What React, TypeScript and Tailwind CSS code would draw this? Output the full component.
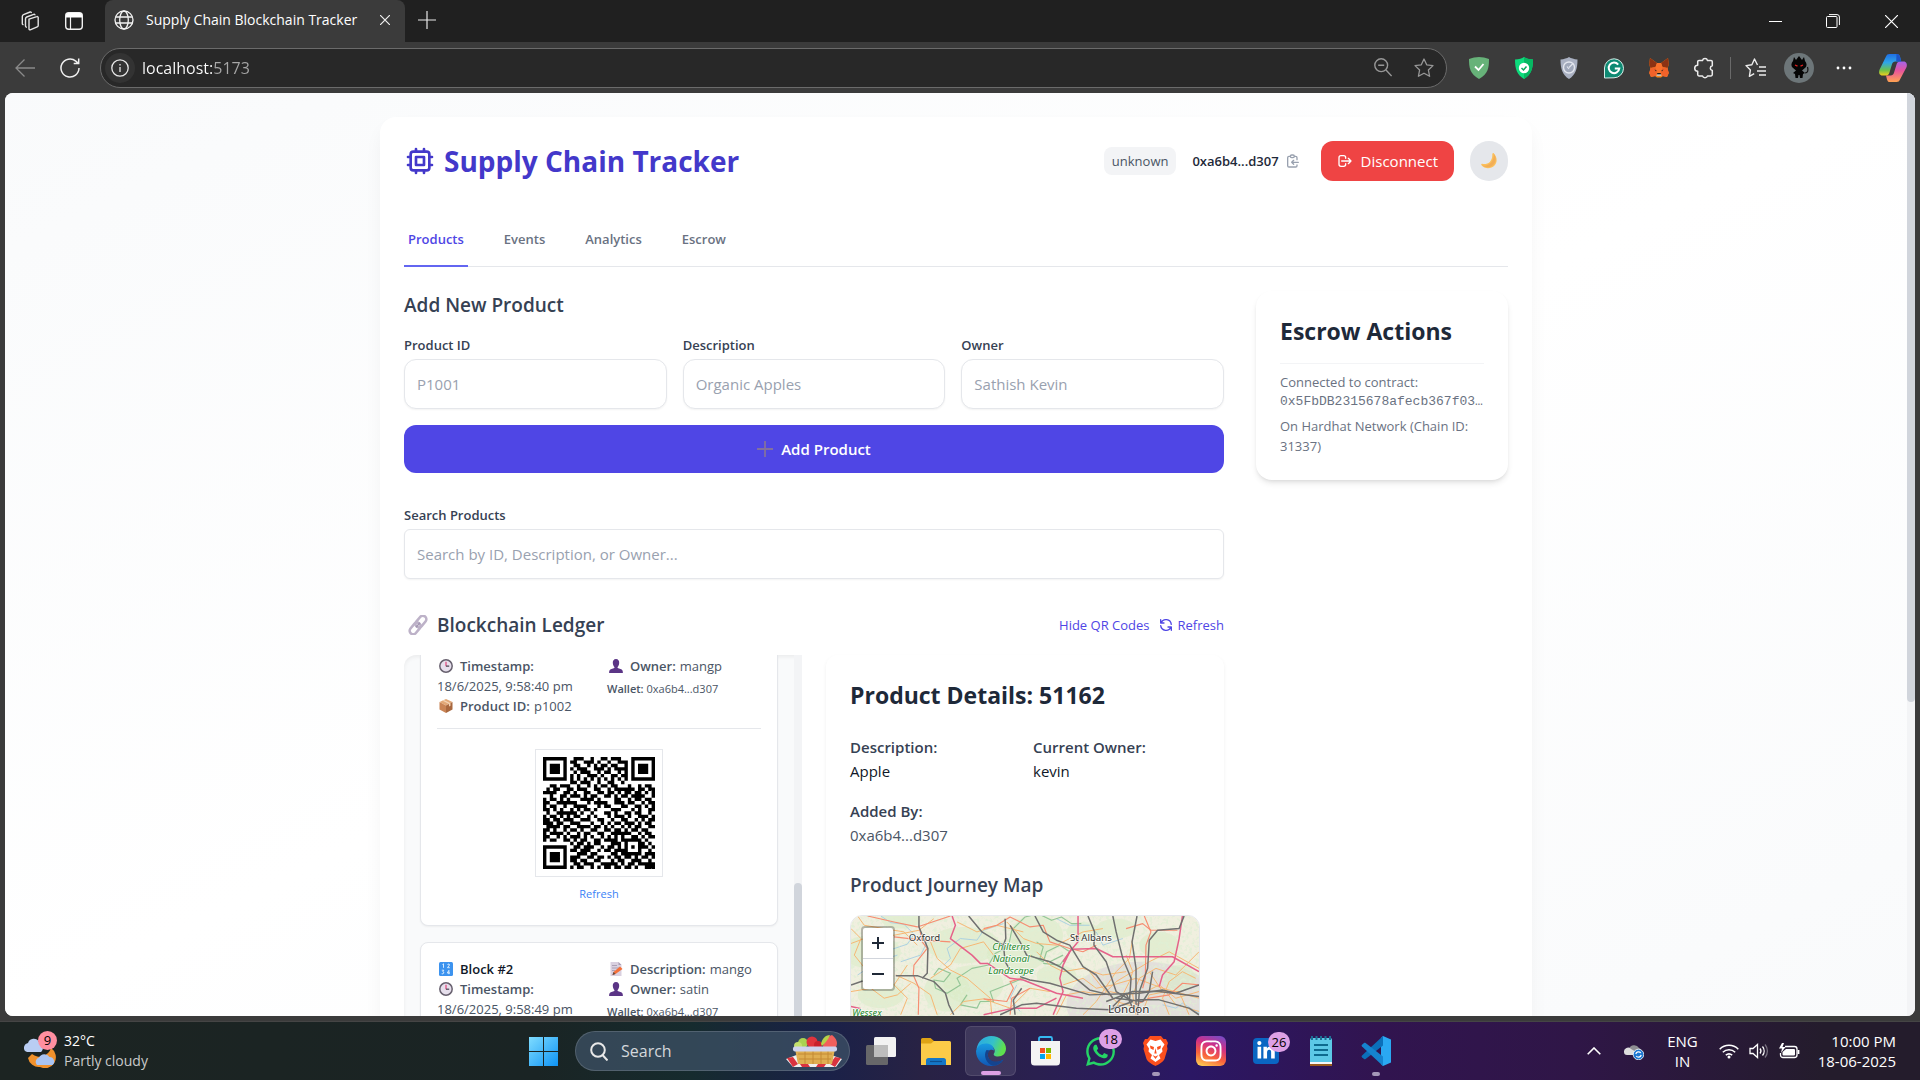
import type { ReactNode } from "react";
import {
  HiOutlineChip,
  HiOutlineClipboardCopy,
  HiOutlineLogout,
  HiOutlineRefresh,
} from "react-icons/hi";
import { FaWhatsapp, FaInstagram, FaLinkedinIn } from "react-icons/fa";

/* ---------- browser chrome ---------- */

function WorkspacesIcon() {
  return (
    <svg viewBox="0 0 24 24" className="size-6" fill="none" stroke="#e4e4e4" strokeWidth="1.4" strokeLinejoin="round" strokeLinecap="round">
      <path d="M11 10.2l7.8-2.6a1 1 0 0 1 1.4 1v7.8a1.6 1.6 0 0 1-1 1.5l-7 2.9a1 1 0 0 1-1.2-.9z" />
      <path d="M8.3 18.2a1.2 1.2 0 0 1-.8-1.1V9.8a2 2 0 0 1 1.2-1.8l7-2.7a1 1 0 0 1 1.2.5" />
      <path d="M5 15.6a1.2 1.2 0 0 1-.7-1V7.4A2 2 0 0 1 5.500 5.600l6.600-2.600a1 1 0 0 1 1.200.5" />
    </svg>
  );
}

function TabLayoutIcon() {
  return (
    <svg viewBox="0 0 20 20" className="size-5" fill="none">
      <rect x="1.700" y="1.700" width="16.600" height="16.600" rx="3" stroke="#f0f0f0" strokeWidth="1.400" />
      <path d="M2 4a2 2 0 0 1 2-2h12a2 2 0 0 1 2 2v2.500H2z" fill="#fff" />
      <path d="M6.500 6v12" stroke="#f0f0f0" strokeWidth="1.200" />
    </svg>
  );
}

function GlobeIcon() {
  return (
    <svg viewBox="0 0 20 20" className="size-5" fill="none" stroke="#f2f2f2" strokeWidth="1.300">
      <circle cx="10" cy="10" r="9" />
      <ellipse cx="10" cy="10" rx="4.300" ry="9" />
      <path d="M1.800 7h16.400M1.800 13h16.400" />
    </svg>
  );
}

function TitleBar() {
  return (
    <div className="flex h-[42px] shrink-0 items-stretch bg-[#202020]">
      <div className="flex w-[105px] items-center gap-[22px] pl-[18px]">
        <button aria-label="Workspaces"><WorkspacesIcon /></button>
        <button aria-label="Tab actions"><TabLayoutIcon /></button>
      </div>
      <div className="flex w-[300px] items-center rounded-t-lg bg-[#3b3b3b] pr-[10px] pb-[2px] pl-[9px]">
        <GlobeIcon />
        <span className="ml-3 flex-1 text-[14px] leading-5 whitespace-nowrap text-white">Supply Chain Blockchain Tracker</span>
        <button aria-label="Close tab" className="flex size-5 items-center justify-center">
          <svg viewBox="0 0 10 10" className="size-[10px]" stroke="#f0f0f0" strokeWidth="1.200"><path d="M0 0l10 10M10 0L0 10" /></svg>
        </button>
      </div>
      <button aria-label="New tab" className="ml-[12px] flex w-5 items-center justify-center pb-[2px]">
        <svg viewBox="0 0 18 18" className="size-[18px]" stroke="#e8e8e8" strokeWidth="1.200"><path d="M9 0v18M0 9h18" /></svg>
      </button>
      <div className="ml-auto flex text-white">
        <button aria-label="Minimize" className="flex w-[58px] items-center justify-center">
          <svg viewBox="0 0 13 13" className="size-[13px]" stroke="#fff"><path d="M0 6.500h13" /></svg>
        </button>
        <button aria-label="Restore" className="flex w-[58px] items-center justify-center">
          <svg viewBox="0 0 14 14" className="size-[14px]" fill="none" stroke="#fff"><rect x=".5" y="2.500" width="10.500" height="11" rx="1" /><path d="M3 .6h8a2.400 2.400 0 0 1 2.400 2.400v8" /></svg>
        </button>
        <button aria-label="Close" className="flex w-[58px] items-center justify-center">
          <svg viewBox="0 0 13 13" className="size-[13px]" stroke="#fff" strokeWidth="1.200"><path d="M0 0l13 13M13 0L0 13" /></svg>
        </button>
      </div>
    </div>
  );
}

function ExtButton({ label, children }: { label: string; children: ReactNode }) {
  return (
    <button aria-label={label} className="flex w-[45px] items-center justify-center">
      {children}
    </button>
  );
}

function CopilotIcon() {
  return (
    <svg viewBox="0 0 30 30" className="size-[30px]">
      <defs>
        <linearGradient id="cpA" x1="0" y1="0" x2="0" y2="1">
          <stop offset="0" stopColor="#1f6fe6" /><stop offset=".4" stopColor="#2fa6e8" /><stop offset=".75" stopColor="#6cc24a" /><stop offset="1" stopColor="#f0cf1d" />
        </linearGradient>
        <linearGradient id="cpB" x1="0" y1="0" x2="0" y2="1">
          <stop offset="0" stopColor="#a564e8" /><stop offset=".45" stopColor="#e8549c" /><stop offset="1" stopColor="#ffa351" />
        </linearGradient>
      </defs>
      <path d="M8 3.500C8.600 1.800 9.800 1 11.500 1H19c1.800 0 2.500 1 3 2.600l1.300 4.900h-5.800c-2 0-2.900 1-3.500 2.800l-2.600 8.400c-.6 1.900-1.600 2.800-3.400 2.800H4.600C1.500 22.500.6 20 1.400 17z" fill="url(#cpA)" />
      <path d="M22 26.500c-.6 1.700-1.800 2.500-3.500 2.500H12c-1.800 0-2.500-1-3-2.600l-1-3.900h4.500c2 0 2.900-1 3.500-2.800l2.600-8.400c.6-1.900 1.600-2.800 3.400-2.800h3.400c3.100 0 4 2.500 3.200 5.500z" fill="url(#cpB)" />
      <path d="M18.500 1c2 0 2.800 1 3.300 2.600l1.500 4.900h-5.100z" fill="#1c54c9" />
    </svg>
  );
}

function Toolbar() {
  return (
    <div className="flex h-[51px] shrink-0 items-center bg-[#3b3b3b]">
      <button aria-label="Back" className="ml-[15px] flex w-5 justify-center">
        <svg viewBox="0 0 20 18" className="h-[18px] w-5" fill="none" stroke="#8a8a8a" strokeWidth="1.300"><path d="M20 9H1M9.500.5L1 9l8.500 8.500" /></svg>
      </button>
      <button aria-label="Reload" className="ml-[25px] flex w-5 justify-center">
        <svg viewBox="0 0 20 20" className="size-5" fill="none" stroke="#f0f0f0" strokeWidth="1.500"><path d="M19 10a9 9 0 1 1-3.200-6.900l2.200 2M18.700.5v5h-5" /></svg>
      </button>
      <div className="ml-5 flex h-10 min-w-0 flex-1 items-center rounded-full border border-[#6b6b6b] bg-[#282828] pr-3 pl-1">
        <button aria-label="Site information" className="flex size-[30px] shrink-0 items-center justify-center rounded-full bg-[#333]">
          <svg viewBox="0 0 18 18" className="size-[18px]" fill="none" stroke="#e8e8e8" strokeWidth="1.300"><circle cx="9" cy="9" r="8.200" /><path d="M9 8v5M9 5v1.500" /></svg>
        </button>
        <input
          aria-label="Address"
          defaultValue="localhost:5173"
          className="ml-[7px] h-7 min-w-0 flex-1 bg-[linear-gradient(to_right,#fff_72px,#a8a8a8_72px)] bg-clip-text text-[16px] leading-6 text-transparent outline-none"
        />
        <div className="ml-4 flex items-center gap-[22px]">
          <button aria-label="Zoom level">
            <svg viewBox="0 0 18 19" className="h-[19px] w-[18px]" fill="none" stroke="#979797" strokeWidth="1.400"><circle cx="7.200" cy="7.200" r="6.400" /><path d="M4.200 7.200h6M12 12l5.600 6" /></svg>
          </button>
          <button aria-label="Add to favorites">
            <svg viewBox="0 0 20 20" className="size-5" fill="none" stroke="#979797" strokeWidth="1.300" strokeLinejoin="round"><path d="M10 1l2.700 5.800 6.300.8-4.600 4.400 1.200 6.300L10 15.200l-5.600 3.100 1.200-6.300L1 7.600l6.300-.8z" /></svg>
          </button>
        </div>
      </div>
      <div className="ml-[9px] flex h-10 shrink-0 items-center">
        <ExtButton label="AdGuard">
          <svg viewBox="0 0 20 22" className="h-[22px] w-5"><path d="M10 0c3 0 7 .8 10 2 0 9-1 15-10 20C1 17 0 11 0 2 3 .8 7 0 10 0z" fill="#67b279" /><path d="M6 9.500l3.500 3.500 5-6" fill="none" stroke="#fff" strokeWidth="1.800" /></svg>
        </ExtButton>
        <ExtButton label="Secure browsing">
          <svg viewBox="0 0 18 22" className="h-[22px] w-[18px]"><path d="M9 0c2 1.500 5 2.400 9 2.600C18 12 16 18 9 22 2 18 0 12 0 2.600 4 2.400 7 1.500 9 0z" fill="#0ddb7c" /><path d="M9 0c2 1.500 5 2.400 9 2.600C18 12 16 18 9 22z" fill="#06b862" /><circle cx="9" cy="11" r="5.200" fill="#fff" /><path d="M6.500 11l2 2 3-3.500" fill="none" stroke="#07a85a" strokeWidth="1.500" /></svg>
        </ExtButton>
        <ExtButton label="Privacy shield">
          <svg viewBox="0 0 18 22" className="h-[22px] w-[18px]"><path d="M9 0c2 1.300 5 2.200 8.500 2.500C17.500 12 15.500 18 9 22 2.500 18 .5 12 .5 2.500 4 2.200 7 1.300 9 0z" fill="#aab1c2" /><circle cx="9" cy="10.500" r="5.500" fill="#a0a8ba" stroke="#e3e6ee" strokeWidth="1.400" /><path d="M9 10.500l4-4M7 9.500l2 2.500" stroke="#e3e6ee" strokeWidth="1.200" /></svg>
        </ExtButton>
        <ExtButton label="Grammarly">
          <svg viewBox="0 0 22 22" className="size-[22px]"><path d="M1.500 21V11A9.500 9.500 0 1 1 11 20.800z" fill="#0e8a73" stroke="#d7eee9" strokeWidth="1" /><path d="M15.200 7.600A5.300 5.300 0 1 0 16.300 11.500h-4.500" fill="none" stroke="#fff" strokeWidth="2" /></svg>
        </ExtButton>
        <ExtButton label="MetaMask">
          <svg viewBox="0 0 20 20" className="size-5">
            <path d="M1 0l7 5h4l7-5 .8 6-1.300 5 1.300 4-1.800 4-4-1-2 1.500H8L6 18l-4 1-1.800-4 1.300-4L.2 6z" fill="#f6851b" />
            <path d="M1 0l7 5-1.500 4-5 1L.2 6zM19 0l-7 5 1.500 4 5 1L19.800 6z" fill="#8c3214" />
            <path d="M1.500 10l5-1 2 5L7 18l-5 1-1.800-4zM18.500 10l-5-1-2 5 1.500 4 5 1 1.800-4z" fill="#f0622a" />
            <path d="M8 5h4l1.500 4-1.500 5.500H8L6.500 9z" fill="#f9702c" />
            <path d="M5.500 11.500l2 .8-.4 1.200zM14.500 11.500l-2 .8.4 1.200z" fill="#222" />
            <path d="M8 16h4l.5 2H7.500z" fill="#c9bdb3" /><path d="M8.300 15h3.400l.3 1.300H8z" fill="#1c1a19" />
          </svg>
        </ExtButton>
        <ExtButton label="Extensions">
          <svg viewBox="0 0 20 22" className="h-[22px] w-5" fill="none" stroke="#ececec" strokeWidth="1.500" strokeLinejoin="round"><path d="M5 3.500h3.500a2.600 2.600 0 0 1 5 0H17a1.300 1.300 0 0 1 1.300 1.300v4a2.400 2.400 0 0 0-2 2.400 2.400 2.400 0 0 0 2 2.400v4a1.300 1.300 0 0 1-1.300 1.300h-3.500a2.600 2.600 0 0 1-5 0H5a1.300 1.300 0 0 1-1.300-1.300v-3.400a3 3 0 0 1 0-6V4.800A1.300 1.300 0 0 1 5 3.500z" /></svg>
        </ExtButton>
        <div className="ml-1 h-[22px] w-px bg-[#6a6a6a]" />
        <ExtButton label="Favorites">
          <svg viewBox="0 0 22 20" className="ml-1 h-5 w-[22px]" fill="none" stroke="#ececec" strokeWidth="1.400" strokeLinejoin="round"><path d="M12.500 7L9.500 1 6.900 6.800 1 7.600l4.400 4.300-1 6.400 4.800-2.600M14 9h7M12 13h9M14 17h7" /></svg>
        </ExtButton>
        <ExtButton label="Profile">
          <svg viewBox="0 0 30 30" className="size-[30px]"><circle cx="15" cy="15" r="15" fill="#6d7679" /><path d="M10 4l2 3 1.500-2 1.500-2 1.500 2L18 7l2-3 1 4c2 2 2 5 .5 6.500L18 17.500l3 2.500-2 1-.5 4h-2.500l-.5-3h-1l-.5 3H11.500L11 21l-2-1 3-2.500-3.500-3C7 13 7 10 9 8z" fill="#050505" /><path d="M21 20c3 0 3.500-3 2.500-6" stroke="#111" fill="none" strokeWidth="1.200" /><path d="M11 12l2.500 1.200M19 12l-2.500 1.200" stroke="#e02020" strokeWidth="1.300" /></svg>
        </ExtButton>
        <ExtButton label="Settings and more">
          <svg viewBox="0 0 16 4" className="h-1 w-4" fill="#fff"><circle cx="2" cy="2" r="1.400" /><circle cx="8" cy="2" r="1.400" /><circle cx="14" cy="2" r="1.400" /></svg>
        </ExtButton>
        <button aria-label="Copilot" className="mx-3"><CopilotIcon /></button>
      </div>
    </div>
  );
}

/* ---------- pictographs ---------- */

function Moon() {
  return (
    <svg viewBox="0 0 16 16" className="size-4">
      <path d="M12.500 0c4 4 4 9 1 12.500C10 16 4 16.500.3 12c-.3-1 .3-1.400 1-1.200C6 12 11.500 9 11.300 1.500 11.300.5 12-.3 12.500 0z" fill="#fbc05c" />
      <path d="M13 1c2.500 4 2.200 8-.8 11C9 15 4 15 1 12.300 7 14 13 9 13 1z" fill="#eda254" opacity=".6" />
    </svg>
  );
}

function LinkGlyph() {
  return (
    <svg viewBox="0 0 20 20" className="size-5" fill="none">
      <g transform="rotate(-50 10 10)" stroke="#bdb2c8" strokeWidth="2.600">
        <rect x="-1" y="6.500" width="13" height="7" rx="3.500" />
        <rect x="8" y="6.500" width="13" height="7" rx="3.500" />
        <path d="M7 10h6" stroke="#a396b1" strokeWidth="1.500" />
      </g>
    </svg>
  );
}

function Clock() {
  return (
    <svg viewBox="0 0 14 14" className="size-[14px]">
      <circle cx="7" cy="7" r="6.200" fill="#e6dfec" stroke="#67606e" strokeWidth="1.500" />
      <path d="M7 2.800v4.400" stroke="#e0366f" strokeWidth="1.100" /><path d="M7 7.200h3.200" stroke="#4b4453" strokeWidth="1.200" />
    </svg>
  );
}

function Person() {
  return (
    <svg viewBox="0 0 14 14" className="size-[14px]" fill="#5b3586">
      <path d="M7 0c2.200 0 3.400 1.700 3.200 4C10 6 9.300 7.500 8.600 8.100v1l3.600 1.200c1.200.5 1.700 1.700 1.700 3.700H.1c0-2 .5-3.200 1.700-3.700l3.600-1.200v-1C4.700 7.500 4 6 3.800 4 3.600 1.700 4.800 0 7 0z" />
    </svg>
  );
}

function Parcel() {
  return (
    <svg viewBox="0 0 14 14" className="size-[14px]">
      <path d="M7 0l6.500 3L7 6.500.5 3z" fill="#e2a877" /><path d="M.5 3L7 6.500V14L.5 10.500z" fill="#c98455" /><path d="M13.500 3L7 6.500V14l6.500-3.500z" fill="#a9683f" /><path d="M3.200 1.600L10 5v2.500l1.500-.8V4.200L5 .9z" fill="#f3d3b4" />
    </svg>
  );
}

function Numbers() {
  return (
    <svg viewBox="0 0 14 14" className="size-[14px]">
      <rect width="14" height="14" rx="1.500" fill="#3c93ef" />
      <path d="M3.500 2.500l1-.7v4M8.500 2.500q2-1.300 2 .5L8.500 5.700h2.300M2.800 8.200h2L3.800 9.700q1.500.2.900 1.500-.6 1-2 .5M9.900 12.200V8.300L8.300 11h2.700" fill="none" stroke="#e6f4ff" strokeWidth=".9" />
    </svg>
  );
}

function Memo() {
  return (
    <svg viewBox="0 0 14 14" className="size-[14px]">
      <path d="M1.500 0h8l3 3v11h-11z" fill="#d9d0df" /><path d="M9.500 0l3 3h-3z" fill="#a99db3" /><path d="M3 3.500h5M3 6h7M3 8.500h3" stroke="#a69bb0" strokeWidth=".9" />
      <path d="M3.500 13l1-3L11 4.500l2.500 2.500L6.500 12z" fill="#f4703a" /><path d="M3.500 13l1-3 2 2z" fill="#5a4a45" />
    </svg>
  );
}

/* ---------- QR code ---------- */

const qrRows = [
  "111111100111001001101110001111111",
  "100000101100111010010011101000001",
  "101110100110010101101100101011101",
  "101110101011100111010111101011101",
  "101110100101110010110010101011101",
  "100000101010011101001101101000001",
  "111111101010101010101010101111111",
  "000000001101110010011001000000000",
  "001101110010010101101100010010110",
  "010110011011100110010111111011011",
  "111100110100110011011010110110101",
  "001001101110101100110101101111001",
  "101101010001111010000110010110110",
  "110011111100010111100111011001011",
  "101100100111100010110001100110101",
  "110101001010110100001110001010011",
  "010011111101001000110100110110010",
  "101101010110010100010111010011101",
  "110110111001110011001001100101011",
  "111011001110001001010110111010110",
  "011110110011110110101001010110011",
  "110100101101001100110110101101100",
  "101111010010110011001111110010110",
  "110010101110101001010101001101011",
  "101100110101100110111101111110100",
  "000000001011010110001110100011010",
  "111111100110111001011010101011101",
  "100000101101110010110111100010010",
  "101110100011101100001101111110111",
  "101110101110011011010110110101101",
  "101110101101100110001011001110010",
  "100000100110111001111101011011111",
  "111111101011001010110110110100111",
];

function QrCode() {
  const d = qrRows
    .map((row, y) => row.split("").map((c, x) => (c === "1" ? `M${x} ${y}h1v1h-1z` : "")).join(""))
    .join("");
  return (
    <svg viewBox="0 0 33 33" role="img" aria-label="Product QR code" className="size-28">
      <path d={d} fill="#000" />
    </svg>
  );
}

/* ---------- map ---------- */

function JourneyMap() {
  const orange = ["M20 12L40 40 160 60 200 100", "M0 95L40 80 130 70 205 55 250 20", "M135 190L190 215 240 250 260 310", "M240 200L300 160 330 110 400 90 430 130", "M240 90L260 140 300 175 350 200 420 260 425 310", "M0 240L60 230 100 260 140 250 180 215", "M300 310L340 270 400 262 480 290 540 230 600 240", "M470 30L520 80 560 95 620 100 700 60 760 50", "M560 120L600 160 640 180 700 170 760 190 830 180", "M620 310L650 250 700 240 760 250 800 210 850 180 900 150 960 120 1050 170", "M640 220L700 200 740 230 790 220 860 200 940 230 1050 260", "M700 310L740 270 800 180 840 140 850 80", "M860 310L850 250 870 200 920 170 980 190 1050 120", "M960 310L940 260 960 210 1000 180 1040 200", "M780 240L830 250 890 240 930 220 980 260 1050 240", "M800 290L840 210 850 180 830 130", "M880 300L900 250 950 240 980 280 1050 300", "M720 180L760 230 800 270 870 290", "M900 180L940 240 990 240 1020 310", "M0 50L30 80 10 130 50 180", "M150 310L170 260 130 220 170 160", "M320 30L380 60 440 40 520 60"];
  const red = ["M50 12L130 30 200 45 300 12", "M205 40L215 90 230 110 190 160 188 190 205 230 203 310", "M130 75L215 85 300 90", "M400 50L440 40 480 15 540 45 580 40 600 90 660 110 700 120 740 100", "M400 262L470 270 490 230 480 210 515 200", "M885 12L905 60 890 100 888 200 880 230", "M830 50L880 35 905 55 985 55", "M480 310L485 260 540 230", "M1050 220L1000 215 960 250 900 260 860 280"];
  const pink = ["M305 12L315 40 300 80 365 130 390 155 412 155 480 200 520 205 620 245 700 260", "M685 12L685 90 660 120 640 160 630 200 640 240 610 310", "M640 150L665 112 740 110 790 135 970 135 1050 180", "M1000 12L990 80 975 150 940 190 930 225", "M400 310L490 290 560 290 620 260", "M0 285L30 292"];
  const rail = ["M205 12L205 45 232 110 230 185 215 200", "M0 220L35 208", "M135 192L200 192 250 210 285 245 295 280 310 310", "M355 12L395 60 460 100 465 150 480 175", "M465 20L467 80 455 115", "M480 40L510 90 530 130 600 150 640 170 690 210 720 235 780 250", "M555 12L580 60 620 85 660 100 700 165 740 190 790 260", "M715 12L735 60 733 100 770 150 800 240 850 270", "M790 12L800 60 820 140 845 200 840 270", "M863 12L848 90 860 170 860 280", "M1005 12L990 50 925 55 900 85 895 170 870 240 865 310", "M450 310L515 280 560 275 680 290 780 295 850 270", "M510 195L540 205 600 215 720 250 870 245 940 235 980 245 1050 220", "M860 265L930 265 1020 290 1050 310", "M770 270L850 240 930 240 1050 255", "M790 285L830 245 850 290M800 260L880 270 900 240 910 180", "M495 310L490 265 515 230"];
  const greens = [[60, 120, 90, 50], [150, 20, 60, 30], [340, 100, 110, 55], [370, 220, 90, 60], [560, 70, 80, 60], [290, 240, 70, 60], [500, 130, 90, 50], [90, 250, 70, 40], [700, 60, 50, 30], [930, 100, 60, 40], [620, 190, 60, 30], [800, 50, 60, 30], [990, 200, 50, 40]];
  return (
    <svg viewBox="0 12 1050 900" className="block w-full" fill="none" role="img" aria-label="Map of the area between Oxford and London">
      <defs>
        <filter id="speck" x="0" y="0" width="100%" height="100%">
          <feTurbulence type="fractalNoise" baseFrequency=".1" numOctaves="3" seed="4" />
          <feColorMatrix values="0 0 0 0 .74  0 0 0 0 .86  0 0 0 0 .66  0 5 0 0 -2.500" />
        </filter>
      </defs>
      <rect y="12" width="1050" height="900" fill="#f0efdf" />
      <ellipse cx="880" cy="280" rx="230" ry="130" fill="#e3dfdb" />
      {greens.map(([x, y, w, h]) => (
        <ellipse key={`${x}-${y}`} cx={x} cy={y} rx={w} ry={h} fill="#d9ebc4" opacity=".55" />
      ))}
      <rect y="12" width="1050" height="900" filter="url(#speck)" opacity=".75" />
      <g stroke="#9fcbe3" strokeWidth="2.500">
        <path d="M90 12l30 20 40 5 30 30-20 30-60 20M280 160l20-20-10-30 40-30 50 5 20-30 60-20M20 190l60-40 60-20M620 20l40 20 60 0M940 280l40 10 20-15 50 30M150 150l60-20 20-40M500 220l-20 40 30 40M740 60l20 40 60-20" />
      </g>
      <g stroke="#86be8c" strokeWidth="3.500" opacity=".85" strokeLinejoin="round">
        <path d="M250 190l15-20 35 15-20 25-30-5 5 25 35 15 40-25-10-20 45-30 50-10 20-35 40-20 10-50 40-40 40-10 40 20 30-10 30 20 30 0M540 130l40 20 10-30 40-20 30 20-30 40-50-5M560 90l20 15-10 35 30 10 40-20M350 250l-20 30 50 10 10-20 40 0-10-30 50-20 50-20-10-30" />
      </g>
      <g stroke="#f6b673" strokeWidth="3" strokeLinejoin="round">{orange.map((d) => <path key={d} d={d} />)}</g>
      <g stroke="#f68d72" strokeWidth="3.500" strokeLinejoin="round">{red.map((d) => <path key={d} d={d} />)}</g>
      <g stroke="#e5628a" strokeWidth="4.500" strokeLinejoin="round">{pink.map((d) => <path key={d} d={d} />)}</g>
      <g stroke="#707070" strokeWidth="4.500" strokeLinejoin="round">{rail.map((d) => <path key={d} d={d} />)}</g>
      <g stroke="#fff" strokeOpacity=".75" strokeWidth="5" paintOrder="stroke" fontFamily="'Noto Sans', sans-serif" textAnchor="middle">
        <text x="222" y="87" fontSize="29" fill="#333">Oxford</text>
        <text x="724" y="87" fontSize="29" fill="#333">St Albans</text>
        <text x="838" y="304" fontSize="35" fill="#333">London</text>
        <g fill="#1f8a2c" fontStyle="italic" fontSize="29">
          <text x="483" y="114">Chilterns</text>
          <text x="483" y="150">National</text>
          <text x="483" y="186">Landscape</text>
          <text x="48" y="314" fontSize="28">Wessex</text>
        </g>
      </g>
    </svg>
  );
}

/* ---------- app ---------- */

function AppHeader() {
  return (
    <header className="flex items-center justify-between">
      <h1 className="flex items-center gap-2 text-[28px] leading-9 font-bold text-[#4338ca]">
        <HiOutlineChip className="size-8" />
        Supply Chain Tracker
      </h1>
      <div className="flex items-center gap-4">
        <span className="rounded-lg bg-gray-100 px-2 py-1 text-[13px] leading-5 text-gray-600">unknown</span>
        <div className="flex items-center gap-[6px]">
          <span className="text-[13px] leading-5 font-semibold text-gray-800">0xa6b4...d307</span>
          <button aria-label="Copy address" className="text-gray-400"><HiOutlineClipboardCopy className="size-4" /></button>
        </div>
        <button className="ml-1 flex h-10 items-center gap-2 rounded-xl bg-[#ef4444] px-4 text-[15px] leading-6 text-white">
          <HiOutlineLogout className="size-4" />
          Disconnect
        </button>
        <button aria-label="Dark mode" className="flex h-10 w-[38px] items-center justify-center rounded-full bg-gray-200"><Moon /></button>
      </div>
    </header>
  );
}

function Tabs() {
  const tabs = ["Products", "Events", "Analytics", "Escrow"];
  return (
    <nav className="mt-8 flex gap-8 border-b border-gray-200">
      {tabs.map((t, i) => (
        <button
          key={t}
          className={
            i === 0
              ? "-mb-px border-b-2 border-[#6366f1] px-1 py-4 text-[13px] leading-5 font-semibold text-[#4f46e5]"
              : "-mb-px border-b-2 border-transparent px-1 py-4 text-[13px] leading-5 font-semibold text-gray-500"
          }
        >
          {t}
        </button>
      ))}
    </nav>
  );
}

function Field({ id, label, placeholder }: { id: string; label: string; placeholder: string }) {
  return (
    <div>
      <label htmlFor={id} className="block text-[13px] leading-5 font-semibold text-gray-700">{label}</label>
      <input id={id} placeholder={placeholder} className="mt-1 block h-[50px] w-full rounded-xl border border-gray-200 bg-white px-3 text-[15px] shadow-xs placeholder:text-gray-400" />
    </div>
  );
}

function Row({ icon, label, value, dark }: { icon: ReactNode; label: string; value?: string; dark?: boolean }) {
  return (
    <p className="flex items-center pl-[2px]">
      {icon}
      <strong className={dark ? "ml-[7px] font-semibold whitespace-nowrap text-gray-900" : "ml-[7px] font-semibold whitespace-nowrap"}>{label}</strong>
      {value && <span className="ml-1 whitespace-nowrap">{value}</span>}
    </p>
  );
}

function Wallet() {
  return (
    <p className="mt-[5px] text-[11px] leading-4 whitespace-nowrap"><span className="font-semibold">Wallet:</span> 0xa6b4...d307</p>
  );
}

function Ledger() {
  return (
    <div className="flex items-stretch overflow-hidden rounded-tl-xl bg-gray-50 shadow-[inset_0_2px_4px_rgba(0,0,0,0.06)]">
      <div className="min-w-0 flex-1 px-4 text-[13px] leading-5 text-gray-600">
        <article className="rounded-b-lg border border-t-0 border-gray-200 bg-white px-4 pt-px pb-[23px] shadow-xs">
          <div className="grid grid-cols-2 gap-4">
            <div>
              <Row icon={<Clock />} label="Timestamp:" />
              <p className="whitespace-nowrap">18/6/2025, 9:58:40 pm</p>
              <Row icon={<Parcel />} label="Product ID:" value="p1002" />
            </div>
            <div>
              <Row icon={<Person />} label="Owner:" value="mangp" />
              <Wallet />
            </div>
          </div>
          <div className="mt-3 flex flex-col items-center border-t border-gray-200 pt-5">
            <div className="border border-gray-200 bg-white p-[7px]"><QrCode /></div>
            <button className="mt-[9px] text-[11px] leading-4 text-[#3b82f6]">Refresh</button>
          </div>
        </article>
        <article className="mt-4 rounded-lg border border-gray-200 bg-white p-4 shadow-xs">
          <div className="grid grid-cols-2 gap-4">
            <div>
              <Row icon={<Numbers />} label="Block #2" dark />
              <Row icon={<Clock />} label="Timestamp:" />
              <p className="whitespace-nowrap">18/6/2025, 9:58:49 pm</p>
            </div>
            <div>
              <Row icon={<Memo />} label="Description:" value="mango" />
              <Row icon={<Person />} label="Owner:" value="satin" />
              <Wallet />
            </div>
          </div>
        </article>
      </div>
      <div className="w-2 bg-gray-100 pt-[228px]"><div className="h-full rounded-full bg-gray-300" /></div>
    </div>
  );
}

function Details() {
  return (
    <section className="min-w-0 rounded-xl bg-white p-6 shadow-[0_2px_4px_rgba(0,0,0,0.06)]">
      <h2 className="text-[23px] leading-8 font-bold text-gray-800">Product Details: 51162</h2>
      <dl className="mt-6 grid grid-cols-2 gap-4 text-[15px] leading-6 text-gray-900">
        <div><dt className="font-semibold text-gray-700">Description:</dt><dd>Apple</dd></div>
        <div><dt className="font-semibold text-gray-700">Current Owner:</dt><dd>kevin</dd></div>
        <div><dt className="font-semibold text-gray-700">Added By:</dt><dd className="text-gray-600">0xa6b4...d307</dd></div>
      </dl>
      <h3 className="mt-6 text-[19px] leading-7 font-semibold text-gray-700">Product Journey Map</h3>
      <div className="relative mt-4 overflow-hidden rounded-xl border border-gray-200">
        <JourneyMap />
        <div className="absolute top-[10px] left-[10px] flex flex-col rounded border-2 border-black/25 bg-white bg-clip-padding">
          <button aria-label="Zoom in" className="flex h-[31px] w-[30px] items-center justify-center border-b border-gray-300">
            <svg viewBox="0 0 12 12" className="size-3" stroke="#1f2937" strokeWidth="2"><path d="M6 0v12M0 6h12" /></svg>
          </button>
          <button aria-label="Zoom out" className="flex h-[30px] w-[30px] items-center justify-center">
            <svg viewBox="0 0 12 12" className="size-3" stroke="#1f2937" strokeWidth="2"><path d="M0 6h12" /></svg>
          </button>
        </div>
      </div>
    </section>
  );
}

function EscrowCard() {
  return (
    <aside className="self-start rounded-2xl bg-white p-6 shadow-md">
      <h2 className="text-[23px] leading-8 font-bold text-gray-800">Escrow Actions</h2>
      <div className="mt-4 border-t border-gray-100 pt-2 text-[13px] leading-5 text-gray-500">
        <p>Connected to contract:</p>
        <p className="truncate font-['Liberation_Mono',monospace]">0x5FbDB2315678afecb367f032d93F642f64180aa3</p>
        <p className="mt-1">On Hardhat Network (Chain ID: 31337)</p>
      </div>
    </aside>
  );
}

function Page() {
  return (
    <div className="mx-[5px] mb-[5px] flex min-h-0 flex-1 overflow-hidden rounded-lg bg-white">
      <div className="flex min-w-0 flex-1 items-start justify-center overflow-hidden bg-linear-to-br from-gray-50 via-white to-gray-50 pt-6">
        <main className="w-full max-w-6xl rounded-2xl bg-white p-6 shadow-[0_10px_20px_-3px_rgba(0,0,0,0.06)]">
          <AppHeader />
          <Tabs />
          <div className="mt-6 grid grid-cols-4 gap-8">
            <div className="col-span-3">
              <h2 className="text-[19px] leading-7 font-semibold text-gray-700">Add New Product</h2>
              <form className="mt-4">
                <div className="grid grid-cols-3 gap-4">
                  <Field id="pid" label="Product ID" placeholder="P1001" />
                  <Field id="desc" label="Description" placeholder="Organic Apples" />
                  <Field id="owner" label="Owner" placeholder="Sathish Kevin" />
                </div>
                <button type="button" className="mt-4 flex h-12 w-full items-center justify-center gap-2 rounded-xl bg-[#4f46e5] text-[15px] leading-6 font-semibold text-white">
                  <svg viewBox="0 0 16 16" className="size-4" stroke="#82709f" strokeWidth="1.800"><path d="M8 0v16M0 8h16" /></svg>
                  Add Product
                </button>
              </form>
              <label htmlFor="search" className="mt-8 block text-[13px] leading-5 font-semibold text-gray-700">Search Products</label>
              <input id="search" placeholder="Search by ID, Description, or Owner..." className="mt-1 block h-[50px] w-full rounded-md border border-gray-200 bg-white px-3 text-[15px] shadow-xs placeholder:text-gray-400" />
              <div className="mt-8 flex items-center justify-between">
                <h2 className="flex items-center gap-[9px] pl-1 text-[19px] leading-7 font-semibold text-gray-700"><LinkGlyph />Blockchain Ledger</h2>
                <div className="flex items-center gap-2 text-[13px] leading-5 text-[#4f46e5]">
                  <button>Hide QR Codes</button>
                  <button className="flex items-center gap-1"><HiOutlineRefresh className="size-4" />Refresh</button>
                </div>
              </div>
              <div className="mt-4 grid grid-cols-2 gap-6">
                <Ledger />
                <Details />
              </div>
            </div>
            <EscrowCard />
          </div>
        </main>
      </div>
      <div className="w-2 bg-gray-100"><div className="h-[66%] rounded-b-full bg-gray-300" /></div>
    </div>
  );
}

/* ---------- taskbar ---------- */

function WeatherIcon() {
  return (
    <svg viewBox="0 0 34 34" className="size-[34px]">
      <path d="M8 20a12 12 0 0 0 19-6A11 11 0 0 1 16 33 11 11 0 0 1 4 24z" fill="#f0912c" />
      <path d="M1 17a5 5 0 0 1 3-8 6 6 0 0 1 11-1 6 6 0 0 1 2 10H3z" fill="#b9cdf3" />
      <path d="M13 31a4.500 4.500 0 0 1 2-7.500 6 6 0 0 1 10.500-.5 4.500 4.500 0 0 1 3 8z" fill="#a9c4f2" />
    </svg>
  );
}

function Basket() {
  return (
    <svg viewBox="0 0 58 34" className="h-[34px] w-[58px] shrink-0">
      <path d="M1 25l13-5h30l13 5-6 8H8z" fill="#eef0ef" /><path d="M2 24l6-1 5 7-5 3zM15 30h8l2 3h-8zM33 30h8l-2 3h-8zM50 23l6 1-6 9-5-3z" fill="#d9333f" />
      <circle cx="18" cy="9" r="5" fill="#a9d251" /><circle cx="13" cy="12" r="4" fill="#c3e06d" /><circle cx="27" cy="8" r="5.500" fill="#e0343d" /><circle cx="33" cy="11" r="4" fill="#c9202c" />
      <path d="M38 13c0-6 4-10 9-12 5 4 6 8 4 12z" fill="#f25f5c" /><path d="M36 10c1-5 4-9 9-9-2 5-5 8-8 11z" fill="#b5d34a" />
      <path d="M10 15h40l-3 15H13z" fill="#dfae52" /><path d="M13 20h34M14 25h32M20 15v15M28 15v15M36 15v15M43 15v15" stroke="#c48a35" />
      <rect x="8" y="12.500" width="44" height="5" rx="2" fill="#cfd3ee" />
    </svg>
  );
}

function Badge({ n }: { n: string }) {
  return <span className="absolute -top-[6px] left-[15px] rounded-full bg-[#dda0e6] px-1 text-[13px] leading-5 text-black">{n}</span>;
}

function TaskApp({ label, active, running, children }: { label: string; active?: boolean; running?: boolean; children: ReactNode }) {
  return (
    <button aria-label={label} className={active ? "relative mx-[2px] flex h-[50px] w-[51px] items-center justify-center rounded-md border border-white/10 bg-white/10" : "relative mx-[2px] flex h-[50px] w-[51px] items-center justify-center"}>
      <span className="relative flex">{children}</span>
      {active && <span className="absolute bottom-0 h-1 w-5 rounded-full bg-[#dda0e6]" />}
      {running && <span className="absolute bottom-0 h-1 w-2 rounded-full bg-[#a597b8]" />}
    </button>
  );
}

function Taskbar() {
  return (
    <div className="flex h-[59px] shrink-0 items-center border-t border-[#454545] bg-[linear-gradient(to_right,#1c2422_0%,#1a2424_28%,#162b2e_36%,#1a2148_43%,#282244_48%,#2a2050_54%,#2b1764_62%,#31144f_72%,#2f1647_82%,#241c2c_95%)] text-white">
      <div className="flex flex-1 items-center pl-6">
        <button className="flex items-center gap-[6px] text-left text-[14px] leading-5">
          <span className="relative">
            <WeatherIcon />
            <span className="absolute -top-[3px] left-[14px] size-[19px] rounded-full bg-[#ff8fa0] text-center text-[13px] leading-[19px] text-black">9</span>
          </span>
          <span>32°C<br /><span className="text-[#c9c9c9]">Partly cloudy</span></span>
        </button>
      </div>
      <div className="flex items-center pl-3">
        <button aria-label="Start">
          <svg viewBox="0 0 29 29" className="size-[29px]"><defs><linearGradient id="win" x1="0" y1="0" x2="1" y2="1"><stop stopColor="#7fdcff" /><stop offset="1" stopColor="#0e93f5" /></linearGradient></defs><path d="M0 0h14v14H0zM15 0h14v14H15zM0 15h14v14H0zM15 15h14v14H15z" fill="url(#win)" /></svg>
        </button>
        <label className="mr-[3px] ml-[17px] flex h-10 w-[275px] items-center rounded-full border border-white/15 bg-[#3d5166]/75 pr-[6px] pl-[14px]">
          <svg viewBox="0 0 18 19" className="h-[19px] w-[18px] shrink-0" fill="none" stroke="#e8e8e8" strokeWidth="2"><circle cx="8" cy="8" r="6.800" /><path d="M12.500 13l5 5.500" /></svg>
          <input type="search" aria-label="Search" placeholder="Search" className="ml-[13px] min-w-0 flex-1 bg-transparent text-[16px] leading-6 outline-none placeholder:text-[#d3d8dc]" />
          <Basket />
        </label>
        <TaskApp label="Task view">
          <svg viewBox="0 0 30 28" className="h-7 w-[30px]"><rect x="8" y="0" width="22" height="20" rx="1.500" fill="#f2f2f2" /><rect x="0" y="8" width="22" height="20" rx="1.500" fill="#6b6b6b" opacity=".95" /><path d="M8 8h14v12H8z" fill="#bdbdbd" /></svg>
        </TaskApp>
        <TaskApp label="File Explorer">
          <svg viewBox="0 0 30 27" className="h-[27px] w-[30px]"><path d="M0 1.500A1.500 1.500 0 0 1 1.500 0h8L13 3v4H0z" fill="#dfa315" /><path d="M0 5.500h10L13 3h15.500A1.500 1.500 0 0 1 30 4.500V27H0z" fill="#fccb48" /><path d="M5 27v-4.500A2.500 2.500 0 0 1 7.500 20h15a2.500 2.500 0 0 1 2.500 2.500V27z" fill="#1577c7" /><path d="M9 23.500h12" stroke="#0d4f8f" strokeWidth="1.200" /></svg>
        </TaskApp>
        <TaskApp label="Microsoft Edge" active>
          <svg viewBox="0 0 30 30" className="size-[30px]">
            <defs>
              <linearGradient id="eA" x1="0" y1="0" x2="1" y2=".3"><stop stopColor="#2aa5e6" /><stop offset=".6" stopColor="#35c1c9" /><stop offset="1" stopColor="#5fe04e" /></linearGradient>
              <linearGradient id="eB" x1="0" y1="0" x2="0" y2="1"><stop stopColor="#199be0" /><stop offset="1" stopColor="#1157b5" /></linearGradient>
            </defs>
            <path d="M.5 13C2 5 8 0 15 0c9 0 15 6.500 15 12.500 0 5-3.500 8-8 8-3.500 0-5-1.500-4-3 2-3 0-8-6-8C6 9.500 2 12 .5 13z" fill="url(#eA)" />
            <path d="M0 15C1 10 5 7 11 7.500c4 .3 7 3 7 7-4-2-7 1-6 6s7 8 15.500 3C25 28 20 30 15 30 6 30 0 23 0 15z" fill="url(#eB)" />
            <path d="M10.500 14C7 19 10 28 17 29.800 21.500 29.500 25 27.500 27.500 23.500 20 27.500 13 25 12 20.500c-.6-3 .5-5 2-6z" fill="#14448f" />
          </svg>
        </TaskApp>
        <TaskApp label="Microsoft Store">
          <svg viewBox="0 0 29 30" className="h-[30px] w-[29px]"><path d="M8 8V2.500A1.500 1.500 0 0 1 9.500 1h10A1.500 1.500 0 0 1 21 2.500V8" fill="none" stroke="#35b9f2" strokeWidth="1.800" /><path d="M0 5h29v21a3.500 3.500 0 0 1-3.500 3.500h-22A3.500 3.500 0 0 1 0 26z" fill="#f4f4f4" /><path d="M9 12h5v5H9z" fill="#f25022" /><path d="M15 12h5v5h-5z" fill="#7fba00" /><path d="M9 18h5v5H9z" fill="#00a4ef" /><path d="M15 18h5v5h-5z" fill="#ffb900" /></svg>
        </TaskApp>
        <TaskApp label="WhatsApp"><FaWhatsapp className="size-[33px] text-[#25d366]" /><Badge n="18" /></TaskApp>
        <TaskApp label="Brave" running>
          <svg viewBox="0 0 25 30" className="h-[30px] w-[25px]"><path d="M7 0h11l2.500 3 2.500 0 2 4-1 3 .5 3-3 10c-1 3-7 6-9 7-2-1-8-4-9-7L.5 13 1 10 0 7l2-4h2.500z" fill="#fb4f1d" /><path d="M12.500 5l5-1.500 4 5-2.500 4 .5 3-3.500 3.500 1.500 3.500-5 3.500-5-3.500L9 19l-3.500-3.500.5-3-2.500-4 4-5z" fill="#fff" /><path d="M7 9.500l4 1.500-.5 3-3-1.500zM18 9.500l-4 1.500.5 3 3-1.500zM12.500 12l1.200 5.500h-2.400zM9.500 19l3 1.500 3-1.500-3 4z" fill="#fb4f1d" /></svg>
        </TaskApp>
        <TaskApp label="Instagram">
          <span className="flex size-[30px] items-center justify-center rounded-md bg-[linear-gradient(20deg,#fdcb52_5%,#f9633b_35%,#d22f86_65%,#6a4fd0_100%)]"><FaInstagram className="size-[24px] text-white" /></span>
        </TaskApp>
        <TaskApp label="LinkedIn">
          <span className="flex size-[26px] items-center justify-center rounded-sm bg-[#0a66c2]"><FaLinkedinIn className="size-[20px] text-white" /></span><Badge n="26" />
        </TaskApp>
        <TaskApp label="Notepad">
          <svg viewBox="0 0 22 30" className="h-[30px] w-[22px]"><rect y="2" width="22" height="27" rx="1.500" fill="#5cc8e6" /><path d="M2 0v4M6.500 0v4M11 0v4M15.500 0v4M20 0v4" stroke="#1c6f95" strokeWidth="2" /><path d="M4 9h14M4 14h14M4 19h14" stroke="#0d6a8e" strokeWidth="1.800" /><path d="M0 26h22v2.500H0z" fill="#f6f6f6" /><path d="M0 28h22v2H0z" fill="#9a5a1d" /></svg>
        </TaskApp>
        <TaskApp label="Visual Studio Code" running>
          <svg viewBox="0 0 30 30" className="size-[30px]"><path d="M22 0l8 3.500v23L22 30l-2-2V2z" fill="#2aa8f2" /><path d="M22 0L1 19.500c-.6.600-.6 1.200 0 1.800L3 23c.5.400 1 .4 1.600 0L22 9.500z" fill="#0b6fba" /><path d="M22 30L1 10.500c-.6-.6-.6-1.200 0-1.800L3 7c.5-.4 1-.4 1.600 0L22 20.500z" fill="#1583cf" /></svg>
        </TaskApp>
      </div>
      <div className="flex flex-1 items-center justify-end pr-6 text-[15px] leading-5">
        <button aria-label="Show hidden icons"><svg viewBox="0 0 14 8" className="h-2 w-[14px]" fill="none" stroke="#fff" strokeWidth="1.600"><path d="M.7 7.300L7 1l6.300 6.300" /></svg></button>
        <button aria-label="OneDrive" className="ml-[23px]">
          <svg viewBox="0 0 20 18" className="h-[18px] w-5"><path d="M5 7a5.500 5.500 0 0 1 10-1 4 4 0 0 1 2 6H6z" fill="#8f8f93" /><path d="M0 10a4 4 0 0 1 7-3l7 4v2H3a3 3 0 0 1-3-3z" fill="#dedede" /><circle cx="14.500" cy="12.500" r="5.300" fill="#1c78d2" stroke="#fff" strokeWidth=".8" /><path d="M11.800 12a2.800 2.800 0 0 1 5-1M17.200 13a2.800 2.800 0 0 1-5 1" stroke="#fff" strokeWidth="1.200" fill="none" /></svg>
        </button>
        <button className="ml-[23px] text-center">ENG<br />IN</button>
        <button aria-label="Network, sound and battery" className="ml-[21px] flex items-center gap-[10px]">
          <svg viewBox="0 0 20 15" className="h-[15px] w-5" fill="none" stroke="#fff" strokeWidth="1.500"><path d="M.7 5.200a13 13 0 0 1 18.600 0M3.800 8.300a9 9 0 0 1 12.400 0M6.800 11.200a5 5 0 0 1 6.400 0" /><circle cx="10" cy="13" r="1.500" fill="#fff" stroke="none" /></svg>
          <svg viewBox="0 0 20 16" className="h-4 w-5" fill="none" stroke="#fff" strokeWidth="1.300"><path d="M1 5.500h3L8.500 1.500v13L4 10.500H1zM11 5.500a4 4 0 0 1 0 5M13.500 3.500a7 7 0 0 1 0 9" /><path d="M16 1.500a10 10 0 0 1 0 13" stroke="#77707f" /></svg>
          <svg viewBox="0 0 21 16" className="h-4 w-[21px]" fill="none" stroke="#fff" strokeWidth="1.300"><path d="M6 3.500h9.500A2.500 2.500 0 0 1 18 6v6a2.500 2.500 0 0 1-2.500 2.500H4A2.500 2.500 0 0 1 1.500 12v-2" /><path d="M19.500 7v4" strokeWidth="1.800" /><path d="M7 6h8a1 1 0 0 1 1 1v4.500a1 1 0 0 1-1 1H4.500a1 1 0 0 1-1-1V9zM3 0L0 5.500h3L2 10l4.500-6h-3L5 0z" fill="#fff" stroke="none" /></svg>
        </button>
        <button className="ml-[18px] text-right">10:00 PM<br />18-06-2025</button>
      </div>
    </div>
  );
}

export default function App() {
  return (
    <div className="flex h-screen flex-col overflow-hidden bg-[#3b3b3b] font-['Open_Sans','Noto_Sans',sans-serif]">
      <TitleBar />
      <Toolbar />
      <Page />
      <Taskbar />
    </div>
  );
}
